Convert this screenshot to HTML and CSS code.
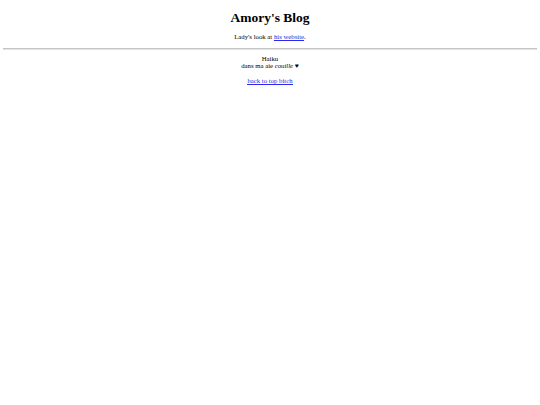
FILE: index.html
```
<!DOCTYPE html>
<html>
<head>
<meta charset="utf-8">
<title>Amory's Blog</title>
<link rel="stylesheet" href="styles.css">
</head>
<body>
<h1 class="title">Amory's Blog</h1>
<p class="intro">Lady's look at <a href="#">his website</a>.</p>
<hr class="rule">
<div class="post">
<p class="haiku">Haiku<br>dans ma aie <i>couille</i> ♥</p>
<p class="back"><a href="#">back to top bitch</a></p>
</div>
</body>
</html>
```
FILE: styles.css
```
html { background: #fff; }
body {
  margin: 3.375px;
  font-family: "Liberation Serif", "Times New Roman", serif;
  font-size: 6.75px;
  color: #000;
  text-align: center;
}
.title {
  font-size: 13.5px;
  margin: 7px 0;
}
p { margin: 0; }
.intro { margin: 0 0 7.75px; }
a {
  color: #2a2ae8;
  text-decoration: underline;
  text-decoration-thickness: 1px;
  text-underline-offset: 1px;
}
.rule {
  margin: 0 0 4.75px;
  border: 0;
  border-top: 1px solid #c4c4c4;
  border-bottom: 1px solid #e4e4e4;
  height: 0;
}
.haiku { margin: 0 0 8.5px; }
.back a {
  display: inline-block;
  line-height: 7px;
  text-decoration: none;
  border-bottom: 1px solid #2a2ae8;
}
```
